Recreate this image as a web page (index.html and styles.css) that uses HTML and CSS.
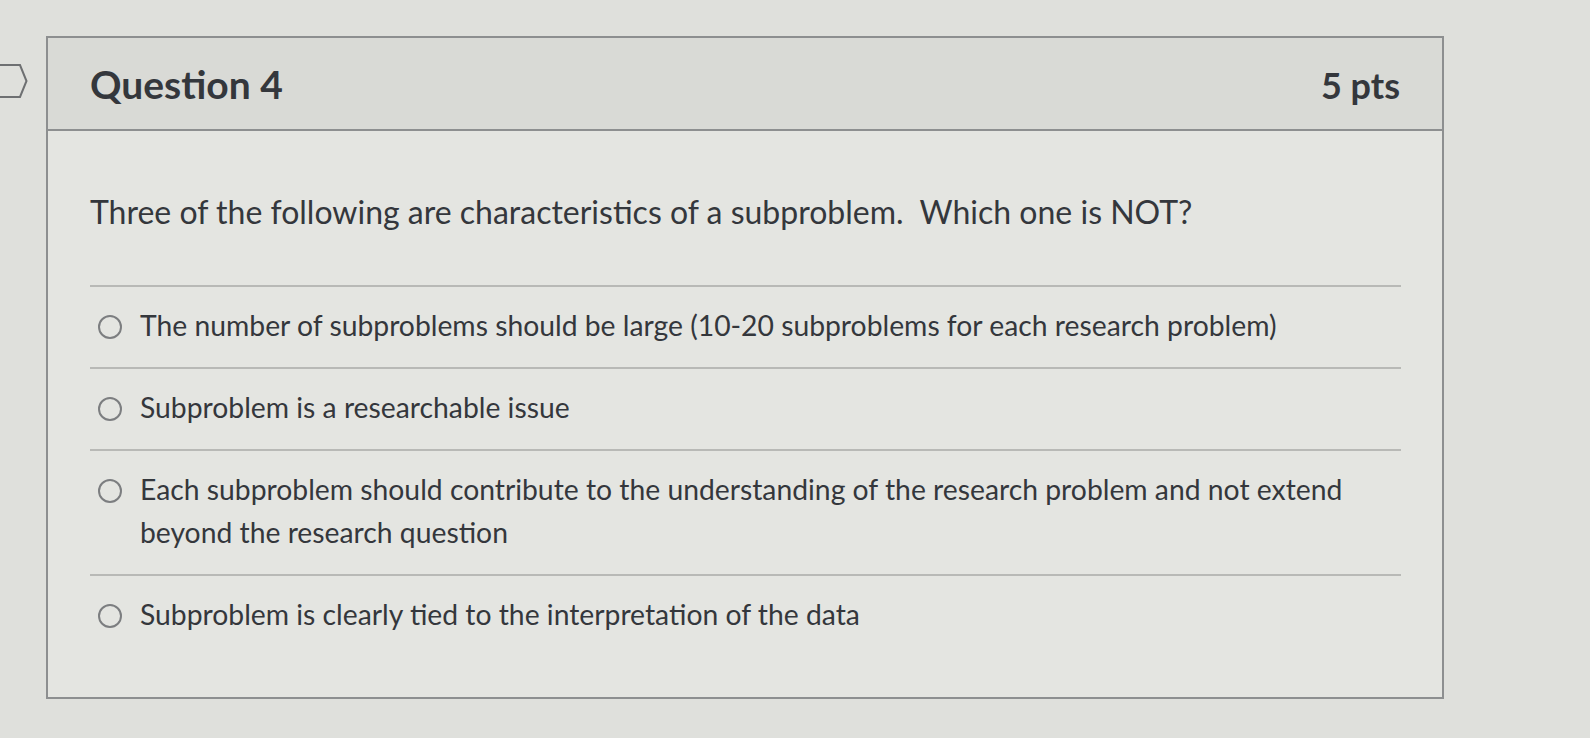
FILE: index.html
```html
<!DOCTYPE html>
<html lang="en">
<head>
<meta charset="utf-8">
<title>Question 4</title>
<link rel="stylesheet" href="styles.css">
</head>
<body>
<div class="page">
  <div class="tab">
    <svg width="28" height="34" viewBox="0 0 28 34"><path d="M-4 1 H20 L26.5 17 L20 33 H-4" fill="none" stroke="#6e7072" stroke-width="2"/></svg>
  </div>
  <div class="quiz">
    <div class="quiz-header">
      <h2 class="title">Question 4</h2>
      <span class="pts">5 pts</span>
    </div>
    <div class="quiz-body">
      <p class="question">Three of the following are characteristics of a subproblem.&nbsp; Which one is NOT?</p>
      <div class="answers">
        <label class="answer"><span class="radio"></span><span class="answer-text">The number of subproblems should be large (10-20 subproblems for each research problem)</span></label>
        <label class="answer"><span class="radio"></span><span class="answer-text">Subproblem is a researchable issue</span></label>
        <label class="answer"><span class="radio"></span><span class="answer-text">Each subproblem should contribute to the understanding of the research problem and not extend beyond the research question</span></label>
        <label class="answer last"><span class="radio"></span><span class="answer-text">Subproblem is clearly tied to the interpretation of the data</span></label>
      </div>
    </div>
  </div>
</div>
</body>
</html>
```

FILE: styles.css
```css
* { box-sizing: border-box; }
html, body {
  margin: 0;
  padding: 0;
  background: #dfe0dc;
  font-family: Lato, "Open Sans", sans-serif;
  color: #34373c;
}
.page {
  display: flex;
  align-items: flex-start;
  padding-top: 36px;
}
.tab {
  width: 28px;
  margin-top: 28px;
  margin-right: 18px;
  flex: none;
}
.tab svg { display: block; }
.quiz {
  width: 1398px;
  height: 663px;
  border: 2px solid #8d8f90;
  background: #e4e5e1;
  flex: none;
}
.quiz-header {
  display: flex;
  justify-content: space-between;
  align-items: baseline;
  height: 93px;
  padding: 0 42px 0 42px;
  background: #d9dad6;
  border-bottom: 2px solid #8d8f90;
}
.title {
  margin: 0;
  font-size: 39px;
  font-weight: 700;
  line-height: 93px;
}
.pts {
  font-size: 36px;
  font-weight: 700;
  line-height: 93px;
}
.quiz-body {
  padding: 0 41px 0 42px;
}
.question {
  margin: 0;
  padding-top: 64px;
  padding-bottom: 56px;
  font-size: 32px;
  line-height: 34px;
  border-bottom: 2px solid #b8b9b6;
}
.answer {
  display: flex;
  align-items: flex-start;
  padding: 17px 0 20px 0;
  border-bottom: 2px solid #b8b9b6;
  font-size: 28.3px;
  line-height: 43px;
}
.answer.last { border-bottom: none; }
.radio {
  flex: none;
  width: 24px;
  height: 24px;
  margin: 11px 18px 0 8px;
  border: 2px solid #7c7e80;
  border-radius: 50%;
}
.answer-text { flex: 1; }
```
